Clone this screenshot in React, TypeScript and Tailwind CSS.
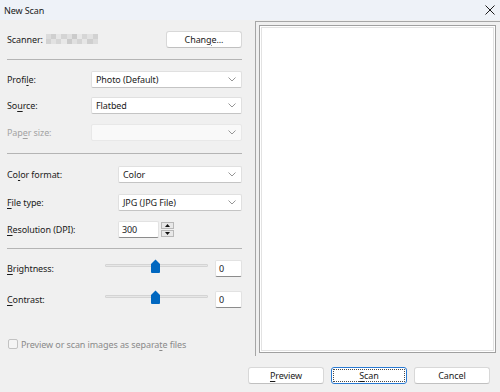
const font = "font-['Noto_Sans',sans-serif]";

const Chevron = () => (
  <svg width="8" height="5" viewBox="0 0 8 5" className="shrink-0">
    <polyline points="0.5,0.5 4,4 7.5,0.5" fill="none" stroke="#8a8a8a" strokeWidth="0.9" />
  </svg>
);

const Key = ({ pre = '', k, post = '' }: { pre?: string; k: string; post?: string }) => (
  <span>
    {pre}
    <span className="underline underline-offset-[1.5px]">{k}</span>
    {post}
  </span>
);

const Select = ({ text, disabled }: { text?: string; disabled?: boolean }) => (
  <div
    className={
      'flex-1 h-[17px] flex items-center justify-between pl-[4px] pr-[5px] rounded-[2px] border ' +
      (disabled
        ? 'bg-[#f9f9f9] border-[#e8e8e8]'
        : 'bg-white border-[#e0e0e0] border-b-[#c4c4c4]')
    }
  >
    <span className="leading-none">{text}</span>
    <Chevron />
  </div>
);

const Separator = ({ mt }: { mt: string }) => <div className={mt + ' h-px bg-[#b4b4b4]'} />;

const Slider = () => (
  <div className="relative w-[103px] h-[14px] flex items-center">
    <div className="w-full h-[3px] bg-[#e7e7e7] border border-[#d4d4d4] rounded-[1px]" />
    <svg width="9" height="14" viewBox="0 0 9 14" className="absolute left-[46px] top-0">
      <path d="M0,5 L4.5,0.5 L9,5 L9,13 Q9,14 8,14 L1,14 Q0,14 0,13 Z" fill="#0067c0" />
    </svg>
  </div>
);

const SmallInput = ({ value }: { value: string }) => (
  <div className="w-[27px] h-[17px] bg-white border border-[#e2e2e2] border-b-[#8c8c8c] rounded-[2px] flex items-center pl-[3px]">
    <span className="leading-none">{value}</span>
  </div>
);

const Button = ({ children, focused }: { children: React.ReactNode; focused?: boolean }) =>
  focused ? (
    <div className="w-[76px] h-[17px] rounded-[3px] border border-[#2a7ad2] bg-white p-[1px]">
      <div className="w-full h-full border border-dotted border-[#4a4a4a] flex items-center justify-center">
        <span className="leading-none">{children}</span>
      </div>
    </div>
  ) : (
    <div className="w-[76px] h-[17px] rounded-[3px] border border-[#d8d8d8] border-b-[#c0c0c0] bg-white flex items-center justify-center">
      <span className="leading-none">{children}</span>
    </div>
  );

const blur = ['#dcdcdc', '#cfcfcf', '#e6e6e6', '#d4d4d4', '#e0e0e0', '#cbcbcb', '#e8e8e8', '#d6d6d6', '#e2e2e2', '#d2d2d2'];

export default function App() {
  return (
    <div className={font + ' w-[500px] h-[392px] bg-[#f0f0f0] text-[9px] tracking-[-0.1px] text-[#1b1b1b] overflow-hidden'}>
      <div className="h-[20px] bg-[#eef2f8] flex items-center justify-between pl-[4px] pr-[5px]">
        <span className="leading-none">New Scan</span>
        <svg width="10" height="10" viewBox="0 0 10 10">
          <path d="M0.5,0.5 L9.5,9.5 M9.5,0.5 L0.5,9.5" stroke="#1b1b1b" strokeWidth="1" />
        </svg>
      </div>

      <div className="flex h-[336px]">
        <div className="w-[255px] pl-[7px] pr-[13px] flex flex-col">
          <div className="mt-[11px] h-[16px] flex items-center justify-between">
            <div className="flex items-center">
              <span className="leading-none">Scanner:</span>
              <div className="ml-[3px] grid grid-cols-10 w-[52px] h-[10px]">
                {blur.concat(blur.slice().reverse()).map((c, i) => (
                  <div key={i} style={{ background: c }} />
                ))}
              </div>
            </div>
            <Button>
              <Key pre="Chan" k="g" post="e..." />
            </Button>
          </div>
          <Separator mt="mt-[12px]" />

          <div className="mt-[11px] flex items-center">
            <span className="w-[84px] leading-none">
              <Key pre="Profi" k="l" post="e:" />
            </span>
            <Select text="Photo (Default)" />
          </div>
          <div className="mt-[9px] flex items-center">
            <span className="w-[84px] leading-none">
              <Key pre="So" k="u" post="rce:" />
            </span>
            <Select text="Flatbed" />
          </div>
          <div className="mt-[10px] flex items-center text-[#a3a3a3]">
            <span className="w-[84px] leading-none">
              <Key pre="Pap" k="e" post="r size:" />
            </span>
            <Select disabled />
          </div>
          <Separator mt="mt-[12px]" />

          <div className="mt-[12px] flex items-center">
            <span className="w-[111px] leading-none">
              <Key pre="Co" k="l" post="or format:" />
            </span>
            <Select text="Color" />
          </div>
          <div className="mt-[11px] flex items-center">
            <span className="w-[111px] leading-none">
              <Key k="F" post="ile type:" />
            </span>
            <Select text="JPG (JPG File)" />
          </div>
          <div className="mt-[10px] flex items-center">
            <span className="w-[111px] leading-none">
              <Key k="R" post="esolution (DPI):" />
            </span>
            <div className="w-[41px] h-[17px] bg-white border border-[#e2e2e2] border-b-[#8c8c8c] rounded-[2px] flex items-center pl-[3px]">
              <span className="leading-none">300</span>
            </div>
            <div className="ml-[2px] w-[13px] h-[15px] flex flex-col gap-[1px]">
              <div className="flex-1 bg-[#e8e8e8] border border-[#b8b8b8] flex items-center justify-center">
                <svg width="5" height="3" viewBox="0 0 5 3">
                  <path d="M0,3 L2.5,0 L5,3 Z" fill="#111" />
                </svg>
              </div>
              <div className="flex-1 bg-[#e8e8e8] border border-[#b8b8b8] flex items-center justify-center">
                <svg width="5" height="3" viewBox="0 0 5 3">
                  <path d="M0,0 L5,0 L2.5,3 Z" fill="#111" />
                </svg>
              </div>
            </div>
          </div>
          <Separator mt="mt-[10px]" />

          <div className="mt-[11px] flex items-center">
            <span className="w-[98px] leading-none">
              <Key k="B" post="rightness:" />
            </span>
            <div className="-mt-[6px]">
              <Slider />
            </div>
            <div className="ml-auto">
              <SmallInput value="0" />
            </div>
          </div>
          <div className="mt-[14px] flex items-center">
            <span className="w-[98px] leading-none">
              <Key k="C" post="ontrast:" />
            </span>
            <div className="-mt-[6px]">
              <Slider />
            </div>
            <div className="ml-auto">
              <SmallInput value="0" />
            </div>
          </div>

          <div className="mt-[31px] flex items-center text-[#8a8a8a]">
            <div className="ml-[1px] w-[10px] h-[10px] rounded-[2px] border border-[#c2c2c2] bg-[#f4f4f4]" />
            <span className="ml-[3px] leading-none">
              <Key pre="Preview or scan images as separa" k="t" post="e files" />
            </span>
          </div>
        </div>

        <div className="flex-1 mt-[1px] border-l border-t border-[#a6a6a6] pl-[3px] pt-[3px] pr-[4px] pb-[3px]">
          <div className="w-full h-full bg-white border border-[#a0a0a0] p-[1px]">
            <div className="w-full h-full border border-[#e2e2e2]" />
          </div>
        </div>
      </div>

      <div className="mt-[11px] flex justify-end gap-[7px] pr-[10px]">
        <Button>
          <Key k="P" post="review" />
        </Button>
        <Button focused>
          <Key k="S" post="can" />
        </Button>
        <Button>Cancel</Button>
      </div>
    </div>
  );
}
